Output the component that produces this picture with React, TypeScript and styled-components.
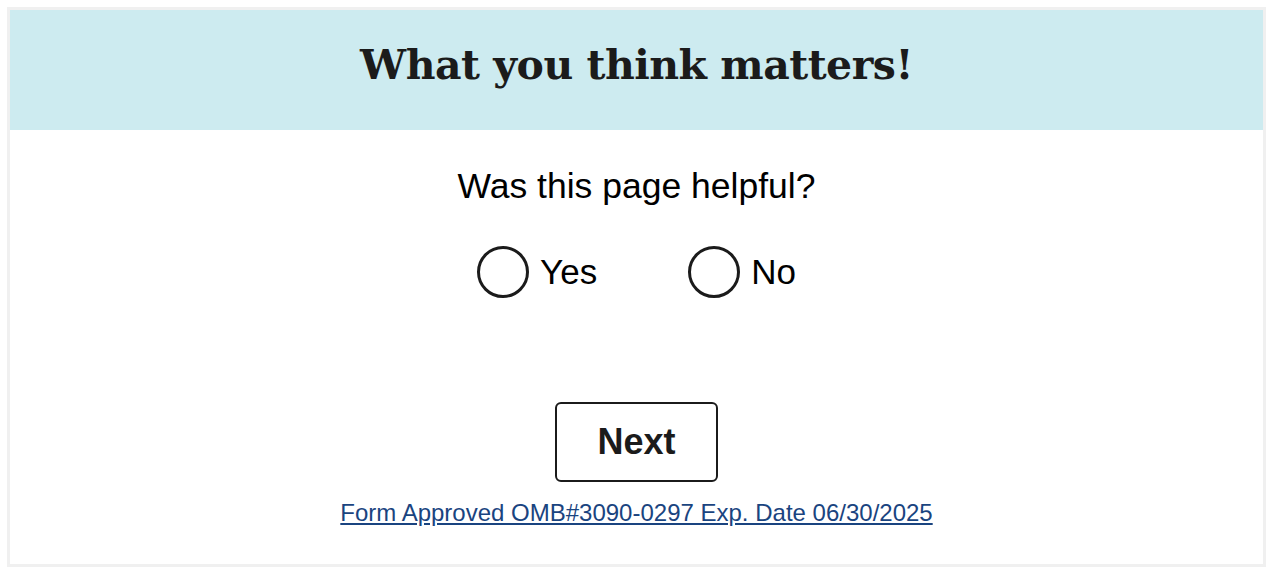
import React, { useState } from 'react'
import styled, { createGlobalStyle } from 'styled-components'

const GlobalStyle = createGlobalStyle`
  body {
    margin: 0;
    padding: 7px 8px 5px 7px;
    background: #ffffff;
    font-family: "Liberation Sans", Arial, sans-serif;
    color: #1b1b1b;
  }
`

const options = ['Yes', 'No']

export default function App() {
  const [choice, setChoice] = useState<string>('')

  return (
    <>
      <GlobalStyle />
      <Card>
        <Header>
          <Title>What you think matters!</Title>
        </Header>
        <Body>
          <Question>Was this page helpful?</Question>
          <Options>
            {options.map((opt) => (
              <Option key={opt} onClick={() => setChoice(opt)}>
                <Radio checked={choice === opt} />
                <span>{opt}</span>
              </Option>
            ))}
          </Options>
          <NextButton>Next</NextButton>
          <OmbLink href="#">Form Approved OMB#3090-0297 Exp. Date 06/30/2025</OmbLink>
        </Body>
      </Card>
    </>
  )
}

const Card = styled.div`
  border: 3px solid #f0f0f0;
  height: 554px;
  display: flex;
  flex-direction: column;
`

const Header = styled.div`
  background: #cdebf0;
  height: 120px;
  display: flex;
  align-items: center;
  justify-content: center;
`

const Title = styled.h1`
  margin: 0;
  font-family: "DejaVu Serif", "Liberation Serif", serif;
  font-weight: bold;
  font-size: 41px;
  letter-spacing: -0.5px;
  color: #1b1b1b;
  padding-bottom: 10px;
`

const Body = styled.div`
  display: flex;
  flex-direction: column;
  align-items: center;
`

const Question = styled.p`
  margin: 36px 0 0;
  font-size: 35.5px;
  line-height: 40px;
  color: #000;
`

const Options = styled.div`
  display: flex;
  gap: 91px;
  margin-top: 40px;
`

const Option = styled.label`
  display: flex;
  align-items: center;
  gap: 11px;
  font-size: 35px;
  color: #000;
  cursor: pointer;
`

const Radio = styled.span<{ checked: boolean }>`
  width: 52px;
  height: 52px;
  box-sizing: border-box;
  border-radius: 50%;
  border: 3px solid #1b1b1b;
  background: ${(p) => (p.checked ? 'radial-gradient(#1b1b1b 40%, #fff 42%)' : '#fff')};
`

const NextButton = styled.button`
  margin-top: 104px;
  width: 163px;
  height: 80px;
  border: 2px solid #1b1b1b;
  border-radius: 6px;
  background: #fff;
  font-family: "Liberation Sans", Arial, sans-serif;
  font-weight: bold;
  font-size: 36px;
  color: #1b1b1b;
  cursor: pointer;
`

const OmbLink = styled.a`
  margin-top: 17px;
  font-size: 24px;
  color: #1a4480;
  text-decoration: underline;
`
